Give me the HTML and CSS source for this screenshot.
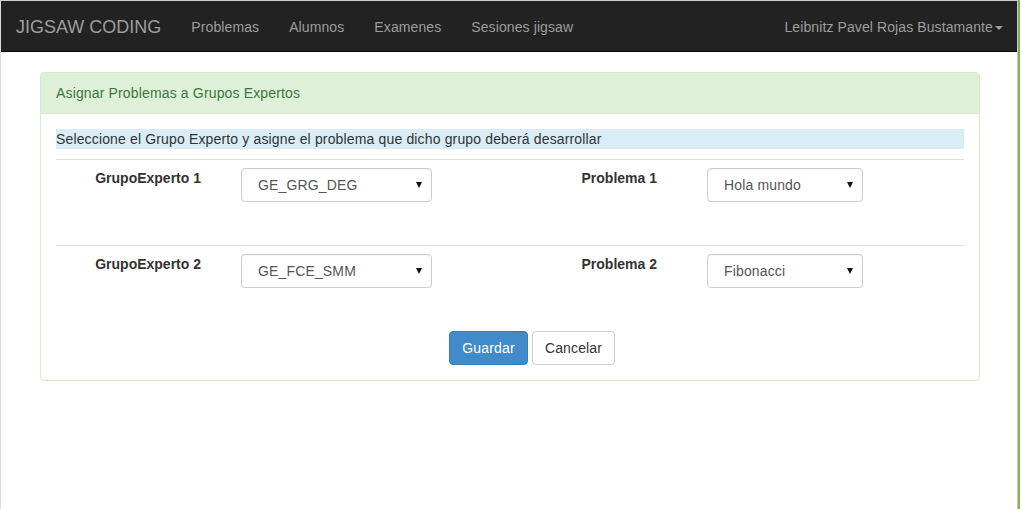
FILE: index.html
```html
<!DOCTYPE html>
<html lang="es">
<head>
<meta charset="utf-8">
<title>Jigsaw Coding</title>
<link rel="stylesheet" href="styles.css">
</head>
<body>
<div class="window">
  <div class="frame">
    <nav class="navbar">
      <a class="brand" href="#">JIGSAW CODING</a>
      <ul class="nav">
        <li><a href="#">Problemas</a></li>
        <li><a href="#">Alumnos</a></li>
        <li><a href="#">Examenes</a></li>
        <li><a href="#">Sesiones jigsaw</a></li>
      </ul>
      <div class="nav-right"><a href="#">Leibnitz Pavel Rojas Bustamante<span class="caret"></span></a></div>
    </nav>
    <main class="container">
      <section class="panel">
        <div class="panel-heading">Asignar Problemas a Grupos Expertos</div>
        <div class="panel-body">
          <p class="info">Seleccione el Grupo Experto y asigne el problema que dicho grupo deberá desarrollar</p>
          <hr class="sep">
          <div class="form-row">
            <label class="lbl lbl-left">GrupoExperto 1</label>
            <div class="select sel-left"><span>GE_GRG_DEG</span><i class="arrow"></i></div>
            <label class="lbl lbl-right">Problema 1</label>
            <div class="select sel-right"><span>Hola mundo</span><i class="arrow"></i></div>
          </div>
          <hr class="sep">
          <div class="form-row">
            <label class="lbl lbl-left">GrupoExperto 2</label>
            <div class="select sel-left"><span>GE_FCE_SMM</span><i class="arrow"></i></div>
            <label class="lbl lbl-right">Problema 2</label>
            <div class="select sel-right"><span>Fibonacci</span><i class="arrow"></i></div>
          </div>
          <div class="actions">
            <button class="btn btn-primary" type="button">Guardar</button>
            <button class="btn btn-default" type="button">Cancelar</button>
          </div>
        </div>
      </section>
    </main>
  </div>
</div>
</body>
</html>
```

FILE: styles.css
```css
* { box-sizing: border-box; }
html, body { margin: 0; padding: 0; background: #fff; }
body {
  font-family: "Liberation Sans", Arial, sans-serif;
  font-size: 14px;
  line-height: 20px;
  color: #333;
  letter-spacing: 0.15px;
}
.window {
  width: 1020px;
  height: 509px;
  border-right: 2px solid #80b34c;
}
.frame {
  width: 1018px;
  height: 509px;
  border-top: 1px solid #cfcfcf;
  border-left: 1px solid #dcdcdc;
  border-right: 1px solid #c8c8c8;
}
.navbar {
  display: flex;
  align-items: center;
  height: 51px;
  background: #222;
  border-bottom: 1px solid #080808;
}
.navbar a { text-decoration: none; color: #9d9d9d; }
.brand {
  font-size: 18px;
  line-height: 20px;
  padding: 16px 15px 14px;
  letter-spacing: 0;
}
.nav {
  display: flex;
  list-style: none;
  margin: 0;
  padding: 0;
}
.nav a {
  display: block;
  padding: 16px 15px 14px;
  line-height: 20px;
  letter-spacing: 0.1px;
}
.nav-right { margin-left: auto; }
.nav-right a {
  display: block;
  padding: 16px 14px 14px 15px;
  letter-spacing: 0.1px;
}
.caret {
  display: inline-block;
  width: 0;
  height: 0;
  margin-left: 2px;
  vertical-align: middle;
  border-top: 4px solid #9d9d9d;
  border-left: 4px solid transparent;
  border-right: 4px solid transparent;
}
.container { padding: 20px 0 0 39px; }
.panel {
  width: 940px;
  border: 1px solid #d6e9c6;
  border-radius: 4px;
  background: #fff;
}
.panel-heading {
  background: #dff0d8;
  color: #3c763d;
  padding: 10px 15px;
  border-bottom: 1px solid #d6e9c6;
  border-radius: 3px 3px 0 0;
}
.panel-body { padding: 15px; }
.info {
  margin: 0;
  background: #d9edf7;
  color: #333;
  height: 20px;
}
.sep {
  margin: 10px 0 0;
  border: 0;
  border-top: 1px solid #ddd;
}
.form-row + .sep { margin-top: 0; }
.form-row {
  display: flex;
  align-items: flex-start;
  padding: 8px 0 43px;
}
.lbl {
  font-weight: bold;
  text-align: right;
  line-height: 20px;
  letter-spacing: 0;
}
.lbl-left { width: 145px; margin-right: 40px; }
.lbl-right { width: 225px; margin-right: 50px; }
.select {
  position: relative;
  height: 34px;
  border: 1px solid #ccc;
  border-radius: 4px;
  color: #555;
  padding: 6px 16px;
  line-height: 20px;
  background: #fff;
  box-shadow: inset 0 1px 1px rgba(0,0,0,0.04);
}
.sel-left { width: 191px; }
.sel-right { width: 156px; }
.arrow {
  position: absolute;
  right: 9px;
  top: 13px;
  width: 0;
  height: 0;
  border-top: 6px solid #111;
  border-left: 3px solid transparent;
  border-right: 3px solid transparent;
}
.actions {
  display: flex;
  gap: 4px;
  padding-left: 393px;
}
.btn {
  font-family: inherit;
  font-size: 14px;
  line-height: 20px;
  letter-spacing: 0.15px;
  height: 34px;
  padding: 6px 10px;
  border-radius: 4px;
  border: 1px solid transparent;
  cursor: pointer;
}
.btn-primary {
  width: 79px;
  background: #428bca;
  border-color: #357ebd;
  color: #fff;
}
.btn-default {
  width: 83px;
  background: #fff;
  border-color: #ccc;
  color: #333;
}
```
